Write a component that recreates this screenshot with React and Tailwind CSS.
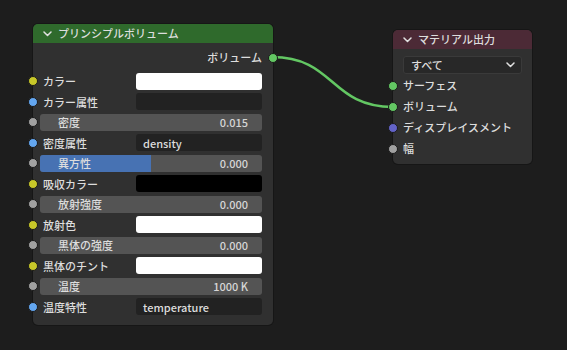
import React from 'react';

const SOCK = {
  yellow: 'bg-[#c7c729]',
  blue: 'bg-[#63a6f0]',
  gray: 'bg-[#a1a1a1]',
  green: 'bg-[#63c763]',
  purple: 'bg-[#6363c7]',
};

function Socket({ color, side = 'left' }) {
  return (
    <span
      className={`absolute top-1/2 -translate-y-1/2 w-[10px] h-[10px] rounded-full border border-[#1a1a1a] ${SOCK[color]} ${
        side === 'left' ? 'left-[-5px]' : 'right-[-5px]'
      }`}
    />
  );
}

const rows = [
  { label: 'カラー', sock: 'yellow', kind: 'color', fill: 'bg-white' },
  { label: 'カラー属性', sock: 'blue', kind: 'text', value: '' },
  { label: '密度', sock: 'gray', kind: 'slider', value: '0.015' },
  { label: '密度属性', sock: 'blue', kind: 'text', value: 'density' },
  { label: '異方性', sock: 'gray', kind: 'slider', value: '0.000', pct: 50 },
  { label: '吸収カラー', sock: 'yellow', kind: 'color', fill: 'bg-black' },
  { label: '放射強度', sock: 'gray', kind: 'slider', value: '0.000' },
  { label: '放射色', sock: 'yellow', kind: 'color', fill: 'bg-white' },
  { label: '黒体の強度', sock: 'gray', kind: 'slider', value: '0.000' },
  { label: '黒体のチント', sock: 'yellow', kind: 'color', fill: 'bg-white' },
  { label: '温度', sock: 'gray', kind: 'slider', value: '1000 K' },
  { label: '温度特性', sock: 'blue', kind: 'text', value: 'temperature' },
];

function Chevron({ className = '' }) {
  return (
    <svg width="9" height="6" viewBox="0 0 9 6" className={className}>
      <path d="M1 1 L4.5 4.5 L8 1" fill="none" stroke="#e0e0e0" strokeWidth="1.5" strokeLinecap="round" strokeLinejoin="round" />
    </svg>
  );
}

function Row({ r }) {
  return (
    <div className="relative h-[20.5px] flex items-center">
      <Socket color={r.sock} />
      {r.kind === 'slider' ? (
        <div className="relative ml-[7px] mr-[11px] flex-1 h-[17px] rounded-[3px] bg-[#545454] overflow-hidden flex items-center justify-between pl-[18px] pr-[14px]">
          {r.pct ? <div className="absolute left-0 top-0 bottom-0 w-[111px] bg-[#4772b3]" /> : null}
          <span className="relative">{r.label}</span>
          <span className="relative text-[#d6d6d6]">{r.value}</span>
        </div>
      ) : (
        <>
          <span className="ml-[10px] w-[93px] shrink-0">{r.label}</span>
          {r.kind === 'color' ? (
            <div className={`mr-[11px] flex-1 h-[17px] rounded-[3px] ${r.fill}`} />
          ) : (
            <div className="mr-[11px] flex-1 h-[17px] rounded-[3px] bg-[#222222] pl-[7px] flex items-center">{r.value}</div>
          )}
        </>
      )}
    </div>
  );
}

export default function App() {
  return (
    <div
      className="relative w-[567px] h-[350px] overflow-hidden bg-[#1d1d1d] text-[11px] font-medium text-[#dddddd]"
      style={{ fontFamily: '"Noto Sans CJK JP", "Noto Sans", sans-serif' }}
    >
      <svg className="absolute inset-0" width="567" height="350">
        <path d="M272 57 C 335 57, 330 107, 393 107" fill="none" stroke="#63c763" strokeWidth="2.5" />
      </svg>

      {/* principled volume */}
      <div className="absolute left-[33px] top-[24px] w-[240px] h-[301px] rounded-[5px] bg-[#303030] ring-1 ring-[#161616] flex flex-col">
        <div className="h-[19px] rounded-t-[5px] bg-[#2f6a2c] flex items-center pl-[10px] gap-[6px] leading-none">
          <Chevron />
          <span>プリンシプルボリューム</span>
        </div>
        <div className="relative h-[25px] mt-[2px] flex items-center justify-end pr-[11px]">
          <span>ボリューム</span>
          <Socket color="green" side="right" />
        </div>
        <div className="mt-[1px] flex flex-col">
          {rows.map((r, i) => (
            <Row key={i} r={r} />
          ))}
        </div>
      </div>

      {/* material output */}
      <div className="absolute left-[393px] top-[30px] w-[139px] h-[134px] rounded-[5px] bg-[#303030] ring-1 ring-[#161616] flex flex-col">
        <div className="h-[19px] rounded-t-[5px] bg-[#4c2a36] flex items-center pl-[10px] gap-[6px] leading-none">
          <Chevron />
          <span>マテリアル出力</span>
        </div>
        <div className="mt-[7px] mx-[10px] h-[18px] rounded-[3px] bg-[#282828] border border-[#3a3a3a] flex items-center justify-between pl-[7px] pr-[6px]">
          <span>すべて</span>
          <Chevron />
        </div>
        <div className="mt-[1px] flex flex-col">
          {[
            ['サーフェス', 'green'],
            ['ボリューム', 'green'],
            ['ディスプレイスメント', 'purple'],
            ['幅', 'gray'],
          ].map(([l, c]) => (
            <div key={l} className="relative h-[21px] flex items-center pl-[10px]">
              <Socket color={c} />
              <span>{l}</span>
            </div>
          ))}
        </div>
      </div>
    </div>
  );
}
